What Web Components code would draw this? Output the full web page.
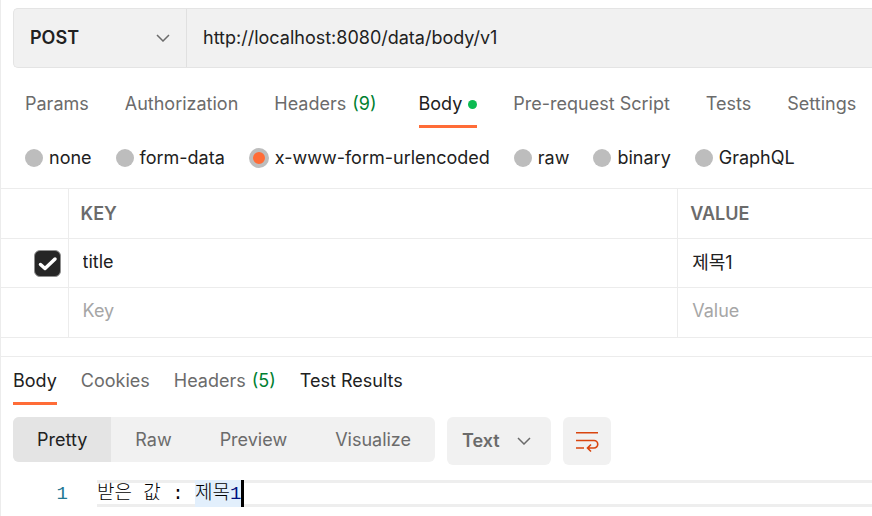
<!DOCTYPE html>
<html lang="ko">
<head>
<meta charset="utf-8">
<meta name="viewport" content="width=device-width, initial-scale=1">
<title>API request</title>
<style>
  html, body { margin: 0; background: #fff; }
  body { font: 18px/24px Inter, "Noto Sans CJK KR", sans-serif; color: #212121; overflow-x: hidden; }
  .digit { color: #001080; }
</style>
</head>
<body>
<request-page>
  <url-bar slot="request" method="POST" url="http://localhost:8080/data/body/v1"></url-bar>
  <tab-list slot="request" kind="request" aria-label="Request">
    <tab-item>Params</tab-item>
    <tab-item>Authorization</tab-item>
    <tab-item count="(9)">Headers</tab-item>
    <tab-item selected dot>Body</tab-item>
    <tab-item>Pre-request Script</tab-item>
    <tab-item>Tests</tab-item>
    <tab-item>Settings</tab-item>
  </tab-list>
  <body-type slot="request"></body-type>
  <param-table slot="request"></param-table>
  <tab-list slot="response" kind="response" aria-label="Response">
    <tab-item selected>Body</tab-item>
    <tab-item>Cookies</tab-item>
    <tab-item count="(5)">Headers</tab-item>
    <tab-item strong>Test Results</tab-item>
  </tab-list>
  <view-bar slot="response"></view-bar>
  <code-view slot="response"><span>받은 값 : </span><mark slot="selection">제목<span class="digit">1</span></mark></code-view>
</request-page>

<script>
const define = (name, html, setup) => {
  const template = document.createElement('template');
  template.innerHTML = html;
  customElements.define(name, class extends HTMLElement {
    constructor() {
      super();
      this.attachShadow({ mode: 'open' }).append(template.content.cloneNode(true));
    }
    connectedCallback() { if (setup) setup(this, this.shadowRoot); }
  });
};

define('request-page', `
  <style>
    :host { display: block; box-sizing: border-box; min-height: 100vh; border-left: 1px solid #ececec; }
    section { display: flex; flex-direction: column; }
    .response { margin-top: 18px; border-top: 1px solid #ececec; }
  </style>
  <section><slot name="request"></slot></section>
  <section class="response"><slot name="response"></slot></section>
`);

define('url-bar', `
  <style>
    :host { display: flex; box-sizing: border-box; height: 60px; margin: 8px 0 0 12px; background: #f1f1f1;
      border: 1px solid #e4e4e4; border-right: 0; border-radius: 5px 0 0 5px; }
    .method { display: grid; align-items: center; width: 172px; border-right: 1px solid #e0e0e0; }
    .method > * { grid-area: 1 / 1; }
    select, input { font: inherit; color: inherit; background: none; border: 0; outline: 0; margin: 0; border-radius: 0; }
    select { appearance: none; width: 100%; height: 100%; padding: 0 16px; font-weight: 600; }
    svg { justify-self: end; margin-right: 16px; pointer-events: none; }
    input { flex: 1; min-width: 0; padding: 0 16px; }
  </style>
  <div class="method">
    <select aria-label="Method"><option>POST</option><option>GET</option></select>
    <svg width="14" height="8" viewBox="0 0 14 8" fill="none" stroke="#6b6b6b" stroke-width="1.5"><path d="M1 1l6 6 6-6"/></svg>
  </div>
  <input type="text" aria-label="Request URL">
`, (el, root) => {
  root.querySelector('select').value = el.getAttribute('method');
  root.querySelector('input').value = el.getAttribute('url');
});

define('tab-list', `
  <style>
    :host { display: flex; white-space: nowrap; }
    :host([kind="request"]) { gap: 36px; padding: 24px 14px 0 24px; }
    :host([kind="request"]) ::slotted([count]) { margin-right: 6px; }
    :host([kind="response"]) { gap: 24px; padding: 12px 12px 0; }
  </style>
  <slot></slot>
`, el => el.setAttribute('role', 'tablist'));

define('tab-item', `
  <style>
    :host { display: block; color: #6b6b6b; }
    :host([selected]), :host([strong]) { color: #212121; }
    button { display: flex; align-items: center; gap: 6px; font: inherit; color: inherit; background: none;
      border: 0; border-bottom: 3px solid transparent; padding: 0 0 9px; margin: 0; }
    :host([selected]) button { border-color: #ff6c37; }
    .count { color: #007f31; }
    .count:empty { display: none; }
    .dot { display: none; width: 9px; height: 9px; border-radius: 50%; background: #0cbb52; }
    :host([dot]) .dot { display: block; }
  </style>
  <button type="button" role="tab"><slot></slot><span class="count"></span><span class="dot"></span></button>
`, (el, root) => {
  root.querySelector('.count').textContent = el.getAttribute('count') || '';
  root.querySelector('button').setAttribute('aria-selected', el.hasAttribute('selected'));
});

define('body-type', `
  <style>
    :host { display: block; }
    form { display: flex; gap: 24px; padding: 18px 12px 18px 24px; white-space: nowrap; }
    label { display: flex; align-items: center; gap: 6px; }
    input { appearance: none; box-sizing: border-box; width: 18px; height: 18px; margin: 0; border-radius: 50%; background: #bdbdbd; }
    input:checked { width: 20px; height: 20px; background: #ff6c37; border: 4px solid #bdbdbd; }
  </style>
  <form>
    <label><input type="radio" name="type">none</label>
    <label><input type="radio" name="type">form-data</label>
    <label><input type="radio" name="type" checked>x-www-form-urlencoded</label>
    <label><input type="radio" name="type">raw</label>
    <label><input type="radio" name="type">binary</label>
    <label><input type="radio" name="type">GraphQL</label>
  </form>
`);

define('param-table', `
  <style>
    :host { display: block; }
    table { width: 100%; table-layout: fixed; border-collapse: collapse; border-bottom: 1px solid #ececec; }
    .check { width: 67px; }
    .key { width: 70%; }
    th, td { box-sizing: border-box; height: 49px; padding: 0 0 0 12px; border-top: 1px solid #ececec; text-align: left; }
    th, .new td { height: 50px; }
    th + th, td + td { border-left: 1px solid #ececec; }
    th { font-weight: 600; color: #6b6b6b; }
    td { vertical-align: top; }
    td:first-child { padding: 0 7px 0 0; vertical-align: middle; }
    input[type="text"] { display: block; box-sizing: border-box; width: 100%; height: 44px; padding: 0 2px;
      font: inherit; color: inherit; background: none; border: 0; outline: 0; }
    input::placeholder { color: #a6a6a6; opacity: 1; }
    .tick { display: grid; width: 27px; margin-left: auto; }
    .tick > * { grid-area: 1 / 1; }
    .tick input { appearance: none; box-sizing: border-box; width: 27px; height: 27px; margin: 0; border: 1px solid #8f8f8f;
      border-radius: 6px; background: #262626; }
    .tick svg { pointer-events: none; }
  </style>
  <table>
    <colgroup><col class="check"><col class="key"><col></colgroup>
    <thead><tr><th></th><th scope="col">KEY</th><th scope="col">VALUE</th></tr></thead>
    <tbody>
      <tr>
        <td><label class="tick"><input type="checkbox" checked aria-label="Use title"><svg width="27" height="27" viewBox="0 0 27 27" fill="none" stroke="#fff" stroke-width="3.5" stroke-linecap="round" stroke-linejoin="round"><path d="M6.5 14.5l4.500 4L21 9"/></svg></label></td>
        <td><input type="text" aria-label="Key" value="title"></td>
        <td><input type="text" aria-label="Value" value="제목1"></td>
      </tr>
      <tr class="new">
        <td></td>
        <td><input type="text" aria-label="New key" placeholder="Key"></td>
        <td><input type="text" aria-label="New value" placeholder="Value"></td>
      </tr>
    </tbody>
  </table>
`);

define('view-bar', `
  <style>
    :host { display: flex; align-items: flex-start; gap: 12px; padding: 12px 12px 0; color: #6b6b6b; }
    button, select { font: inherit; color: inherit; background: none; border: 0; margin: 0; }
    .views { display: flex; height: 45px; border-radius: 6px; background: #f1f1f1; overflow: hidden; }
    .views button { padding: 0 24px; }
    .views button[aria-pressed="true"] { background: #e4e4e4; color: #212121; }
    .format { display: grid; align-items: center; width: 104px; height: 48px; border-radius: 6px; background: #f1f1f1; }
    .format > * { grid-area: 1 / 1; }
    select { appearance: none; width: 100%; height: 100%; padding: 0 15px; font-weight: 600; }
    .format svg { justify-self: end; margin-right: 20px; pointer-events: none; }
    .wrap { display: grid; place-items: center; width: 48px; height: 48px; padding: 0; border-radius: 6px; background: #f1f1f1; }
  </style>
  <div class="views">
    <button type="button" aria-pressed="true">Pretty</button>
    <button type="button">Raw</button>
    <button type="button">Preview</button>
    <button type="button">Visualize</button>
  </div>
  <div class="format">
    <select aria-label="Format"><option>Text</option><option>JSON</option></select>
    <svg width="14" height="8" viewBox="0 0 14 8" fill="none" stroke="#6b6b6b" stroke-width="1.5"><path d="M1 1l6 6 6-6"/></svg>
  </div>
  <button class="wrap" type="button" aria-label="Wrap lines">
    <svg width="24" height="24" viewBox="0 0 24 24" fill="none" stroke="#d9450f" stroke-width="1.6"><path d="M1 3.700h22M1 11.500h18a3.600 3.600 0 0 1 0 7.500H13M1 19h8M16 15.500l-3.500 3.500 3.500 3.500"/></svg>
  </button>
`);

define('code-view', `
  <style>
    :host { display: flex; padding: 15px 0 6px; font: 300 19px/29px "Liberation Mono", "Noto Sans CJK KR", monospace; }
    .number { width: 67px; padding-right: 29px; text-align: right; color: #237893; }
    .line { flex: 1; display: flex; height: 27px; background: linear-gradient(#eee 3px, transparent 3px 24px, #eee 24px); color: #000; white-space: pre; }
    .caret { width: 3px; background: #000; }
    ::slotted(mark) { background: #e2effc; color: #000; }
  </style>
  <span class="number">1</span>
  <div class="line"><slot></slot><slot name="selection"></slot><span class="caret"></span></div>
`);
</script>
</body>
</html>
